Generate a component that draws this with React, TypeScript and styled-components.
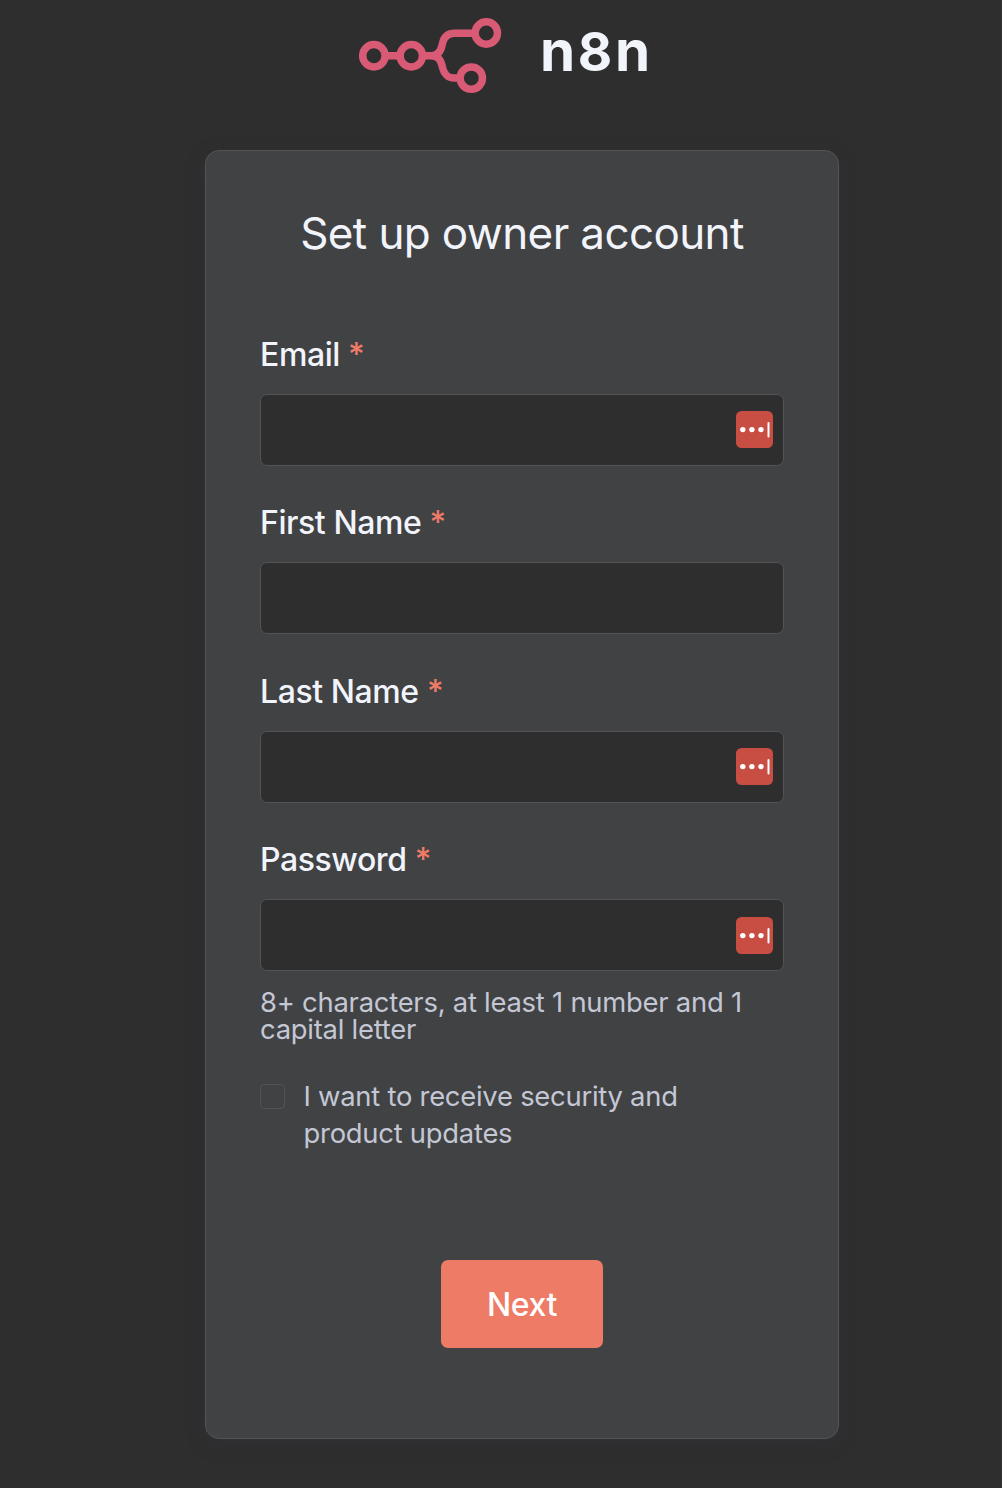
import React from "react";
import styled, { createGlobalStyle } from "styled-components";

const GlobalStyle = createGlobalStyle`
  * { box-sizing: border-box; }
  body {
    margin: 0;
    background: #2e2e2e;
    font-family: Inter, "Liberation Sans", sans-serif;
    -webkit-font-smoothing: antialiased;
  }
`;

const Page = styled.main`
  display: flex;
  flex-direction: column;
  height: 1488px;
  padding: 18px 0 0 205px;
  background: #2e2e2e;
`;

const Brand = styled.header`
  display: flex;
  height: 132px;
  padding-left: 154px;
  gap: 38px;
`;

const LogoMark = styled.svg`
  display: block;
  width: 143px;
  height: 76px;
`;

const Wordmark = styled.div`
  height: 72px;
  font-size: 53px;
  line-height: 68px;
  font-weight: 660;
  letter-spacing: 2.6px;
  color: #f2f4fb;
`;

const Letter = styled.span`
  font-size: 56.5px;
  line-height: 1px;
`;

const Card = styled.form`
  display: flex;
  flex-direction: column;
  width: 634px;
  height: 1289px;
  padding: 54px 54px 0;
  background: #414244;
  border: 1px solid #525356;
  border-radius: 14px;
  box-shadow: 0 5px 16px rgba(50, 48, 58, 0.7);
`;

const Title = styled.h1`
  margin: 0 0 74px;
  font-size: 44px;
  line-height: 56px;
  font-weight: 400;
  letter-spacing: -0.62px;
  text-align: center;
  white-space: nowrap;
  color: #f2f4fb;
`;

const Fields = styled.div`
  display: flex;
  flex-direction: column;
  gap: 37.4px;
`;

const Field = styled.div`
  display: flex;
  flex-direction: column;
`;

const Label = styled.label`
  height: 59px;
  padding-top: 2px;
  font-size: 32px;
  line-height: 36px;
  font-weight: 480;
  letter-spacing: -0.42px;
  color: #f2f4fb;
`;

const Required = styled.span`
  color: #ee7b66;
`;

const InputBox = styled.div`
  display: flex;
  align-items: center;
  height: 72px;
  padding-right: 10px;
  background: #2e2e2e;
  border: 1px solid #525356;
  border-radius: 7px;
`;

const Input = styled.input`
  flex: 1;
  min-width: 0;
  height: 100%;
  padding: 0 20px;
  border: 0;
  outline: 0;
  background: transparent;
  color: #f2f4fb;
  font: inherit;
  font-size: 28px;
`;

const ManagerMark = styled.svg`
  display: block;
  width: 37px;
  height: 37px;
  margin-bottom: 0.2px;
`;

const Hint = styled.p`
  margin: 18px 0 0;
  font-size: 27.4px;
  line-height: 27px;
  letter-spacing: -0.24px;
  color: #c4c7d4;
  white-space: nowrap;
`;

const CheckRow = styled.label`
  display: flex;
  margin-top: 35px;
  gap: 18.5px;
  font-size: 27.4px;
  line-height: 37px;
  letter-spacing: -0.25px;
  color: #c4c7d4;
  white-space: nowrap;
`;

const CheckBox = styled.span`
  width: 25px;
  height: 25px;
  margin-top: 6px;
  border: 1px solid #525356;
  border-radius: 4px;
`;

const NextButton = styled.button`
  align-self: center;
  width: 162px;
  height: 88px;
  margin-top: 107.7px;
  padding: 1px 0 0;
  border: 0;
  border-radius: 7px;
  background: #ee7b66;
  color: #fff;
  font: inherit;
  font-size: 32px;
  font-weight: 480;
  letter-spacing: -0.4px;
`;

function Logo() {
  return (
    <LogoMark viewBox="359 18 143 76" fill="none" stroke="#d95a75" strokeWidth="7.5">
      <circle cx="373.9" cy="55.7" r="11.2" />
      <circle cx="411.3" cy="55.7" r="11.2" />
      <circle cx="486.3" cy="33" r="11.2" />
      <circle cx="471.3" cy="78.1" r="11.2" />
      <path d="M385 55.7H400M422.5 55.7H431.5C438 55.7 440.5 51.5 441.9 46L442.6 43C444 37 448 33.2 454.5 33.2H475" />
      <path d="M431.5 55.7C438 55.7 440.5 59.5 441.9 65L442.6 68C444 74 448 78.1 454.5 78.1H460" />
    </LogoMark>
  );
}

function PasswordManagerIcon() {
  return (
    <ManagerMark viewBox="0 0 37 37">
      <rect width="37" height="37" rx="5.5" fill="#c84d42" />
      <circle cx="6.8" cy="18.6" r="2.7" fill="#fff" />
      <circle cx="15.9" cy="18.6" r="2.7" fill="#fff" />
      <circle cx="25" cy="18.6" r="2.7" fill="#fff" />
      <rect x="31.5" y="11" width="2" height="15.5" rx="1" fill="#fff" />
    </ManagerMark>
  );
}

const fields = [
  { label: "Email", type: "email", icon: true },
  { label: "First Name", type: "text", icon: false },
  { label: "Last Name", type: "text", icon: true },
  { label: "Password", type: "password", icon: true },
];

export default function App() {
  return (
    <>
      <GlobalStyle />
      <Page>
        <Brand>
          <Logo />
          <Wordmark>
            <Letter>n</Letter>8<Letter>n</Letter>
          </Wordmark>
        </Brand>
        <Card>
          <Title>Set up owner account</Title>
          <Fields>
            {fields.map((f) => (
              <Field key={f.label}>
                <Label>
                  {f.label} <Required>*</Required>
                </Label>
                <InputBox>
                  <Input type={f.type} aria-label={f.label} />
                  {f.icon && <PasswordManagerIcon />}
                </InputBox>
              </Field>
            ))}
          </Fields>
          <Hint>
            8+ characters, at least 1 number and 1<br />
            capital letter
          </Hint>
          <CheckRow>
            <CheckBox />
            <span>
              I want to receive security and
              <br />
              product updates
            </span>
          </CheckRow>
          <NextButton type="button">Next</NextButton>
        </Card>
      </Page>
    </>
  );
}
